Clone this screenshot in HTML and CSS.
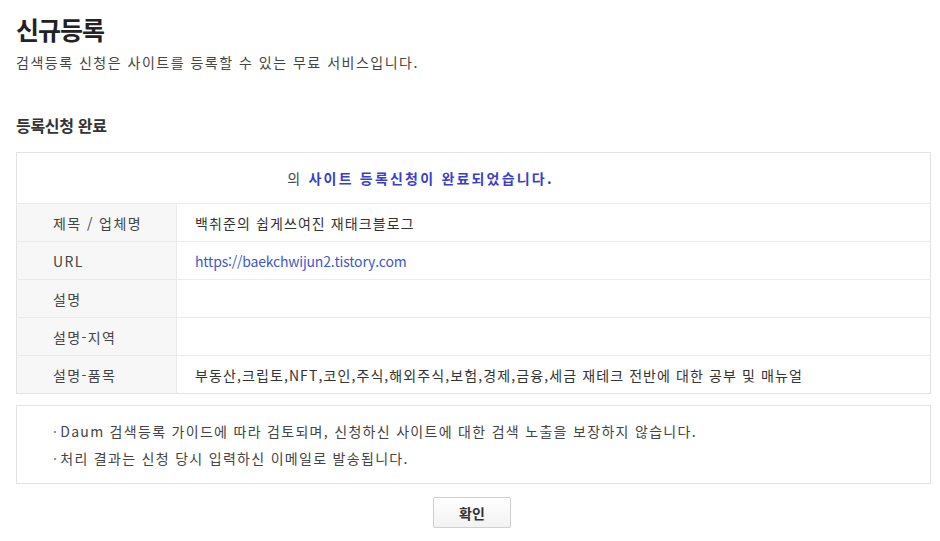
FILE: index.html
```html
<!DOCTYPE html>
<html lang="ko">
<head>
    <meta charset="UTF-8">
    <meta name="viewport" content="width=device-width, initial-scale=1.0">
    <title>신규등록</title>
    <link rel="stylesheet" href="styles.css">
</head>
<body>
    <div class="wrap">
        <h1 class="page-title">신규등록</h1>
        <p class="page-desc">검색등록 신청은 사이트를 등록할 수 있는 무료 서비스입니다.</p>

        <h2 class="section-title">등록신청 완료</h2>

        <table class="result">
            <tr>
                <td class="message" colspan="2">
                    <span class="site-name"></span>의 <strong>사이트 등록신청이 완료되었습니다.</strong>
                </td>
            </tr>
            <tr>
                <th>제목 / 업체명</th>
                <td>백취준의 쉽게쓰여진 재태크블로그</td>
            </tr>
            <tr>
                <th>URL</th>
                <td><a class="url" href="#">https://baekchwijun2.tistory.com</a></td>
            </tr>
            <tr>
                <th>설명</th>
                <td></td>
            </tr>
            <tr>
                <th>설명-지역</th>
                <td></td>
            </tr>
            <tr>
                <th>설명-품목</th>
                <td>부동산,크립토,NFT,코인,주식,해외주식,보험,경제,금융,세금 재테크 전반에 대한 공부 및 매뉴얼</td>
            </tr>
        </table>

        <ul class="notes">
            <li>Daum 검색등록 가이드에 따라 검토되며, 신청하신 사이트에 대한 검색 노출을 보장하지 않습니다.</li>
            <li>처리 결과는 신청 당시 입력하신 이메일로 발송됩니다.</li>
        </ul>

        <div class="actions">
            <button type="button" class="btn">확인</button>
        </div>
    </div>
</body>
</html>
```

FILE: styles.css
```css
body {
    margin: 0;
    font-family: "Noto Sans CJK KR", "Noto Sans", sans-serif;
    color: #333;
    background: #fff;
}
.wrap {
    width: 915px;
    margin-left: 16px;
    padding-top: 12px;
}
.page-title {
    margin: 0;
    font-size: 25px;
    font-weight: bold;
    line-height: 34px;
    letter-spacing: -1px;
    color: #222;
}
.page-desc {
    margin: 5px 0 0;
    font-size: 14px;
    line-height: 22px;
    color: #444;
    letter-spacing: 1.5px;
}
.section-title {
    margin: 40px 0 0;
    font-size: 16px;
    font-weight: bold;
    line-height: 24px;
    color: #333;
    letter-spacing: -0.3px;
}
.result {
    width: 100%;
    margin-top: 15px;
    border-collapse: collapse;
    border: 1px solid #e3e3e3;
    font-size: 14px;
    letter-spacing: 1.1px;
}
.result th,
.result td {
    height: 37px;
    padding: 0;
    border-top: 1px solid #ebebeb;
    text-align: left;
    font-weight: normal;
}
.result th {
    width: 123px;
    padding-left: 36px;
    background: #f7f7f7;
    color: #444;
    border-right: 1px solid #ebebeb;
    letter-spacing: 1.4px;
}
.result td {
    padding-left: 18px;
    color: #333;
}
.result .message {
    height: 50px;
    padding: 0 106px 0 0;
    text-align: center;
    color: #444;
    border-top: 0;
    letter-spacing: 2.2px;
}
.message strong {
    color: #3b3fc8;
    font-weight: bold;
}
.url {
    color: #4158cf;
    text-decoration: none;
    letter-spacing: -0.2px;
}
.notes {
    margin: 11px 0 0;
    padding: 12px 0 11px 36px;
    list-style: none;
    border: 1px solid #e3e3e3;
    font-size: 14px;
    line-height: 27px;
    color: #444;
    letter-spacing: 1.3px;
}
.notes li::before {
    content: "·";
    margin-right: 2px;
    color: #777;
}
.actions {
    display: flex;
    justify-content: center;
    margin-top: 13px;
}
.btn {
    width: 78px;
    height: 31px;
    margin-right: 3px;
    border: 1px solid #cfcfcf;
    border-radius: 2px;
    background: linear-gradient(#ffffff, #f2f2f2);
    box-shadow: 0 1px 1px rgba(0, 0, 0, 0.08);
    font-family: "Noto Sans CJK KR", sans-serif;
    font-size: 14px;
    font-weight: bold;
    color: #333;
    cursor: pointer;
}
```
